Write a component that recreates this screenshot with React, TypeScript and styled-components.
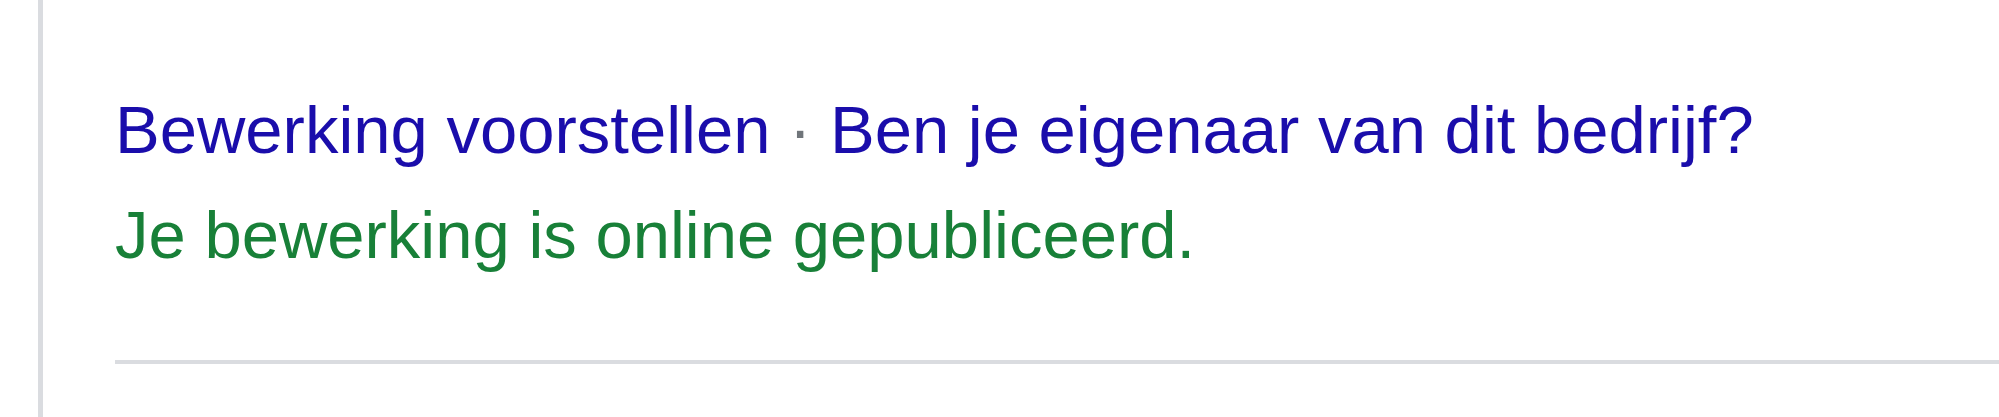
import React from "react";
import styled, { createGlobalStyle } from "styled-components";

const Global = createGlobalStyle`
  html, body { margin: 0; padding: 0; background: #ffffff; }
  body { font-family: Arial, "Liberation Sans", sans-serif; }
`;

const Page = styled.div`
  display: flex;
  height: 417px;
  overflow: hidden;
  background: #ffffff;
`;

const LeftRule = styled.div`
  width: 5px;
  margin-left: 38px;
  background: #dadce0;
  flex: none;
`;

const Content = styled.div`
  flex: 1;
  padding-left: 72px;
  padding-top: 91px;
  display: flex;
  flex-direction: column;
`;

const Line = styled.div<{ $color: string; $gap?: number }>`
  font-family: Arial, "Liberation Sans", sans-serif;
  font-size: 67px;
  line-height: 77px;
  white-space: nowrap;
  color: ${(p) => p.$color};
  margin-top: ${(p) => p.$gap ?? 0}px;
`;

const Link = styled.a`
  color: #1a0dab;
  text-decoration: none;
  cursor: pointer;
`;

const Dot = styled.span`
  color: #70757a;
`;

const Divider = styled.div`
  margin-top: 87px;
  height: 4px;
  background: #dadce0;
`;

export default function App() {
  return (
    <>
      <Global />
      <Page>
        <LeftRule />
        <Content>
          <Line $color="#1a0dab">
            <Link>Bewerking voorstellen</Link>
            <Dot> · </Dot>
            <Link>Ben je eigenaar van dit bedrijf?</Link>
          </Line>
          <Line $color="#188038" $gap={28}>
            Je bewerking is online gepubliceerd.
          </Line>
          <Divider />
        </Content>
      </Page>
    </>
  );
}
